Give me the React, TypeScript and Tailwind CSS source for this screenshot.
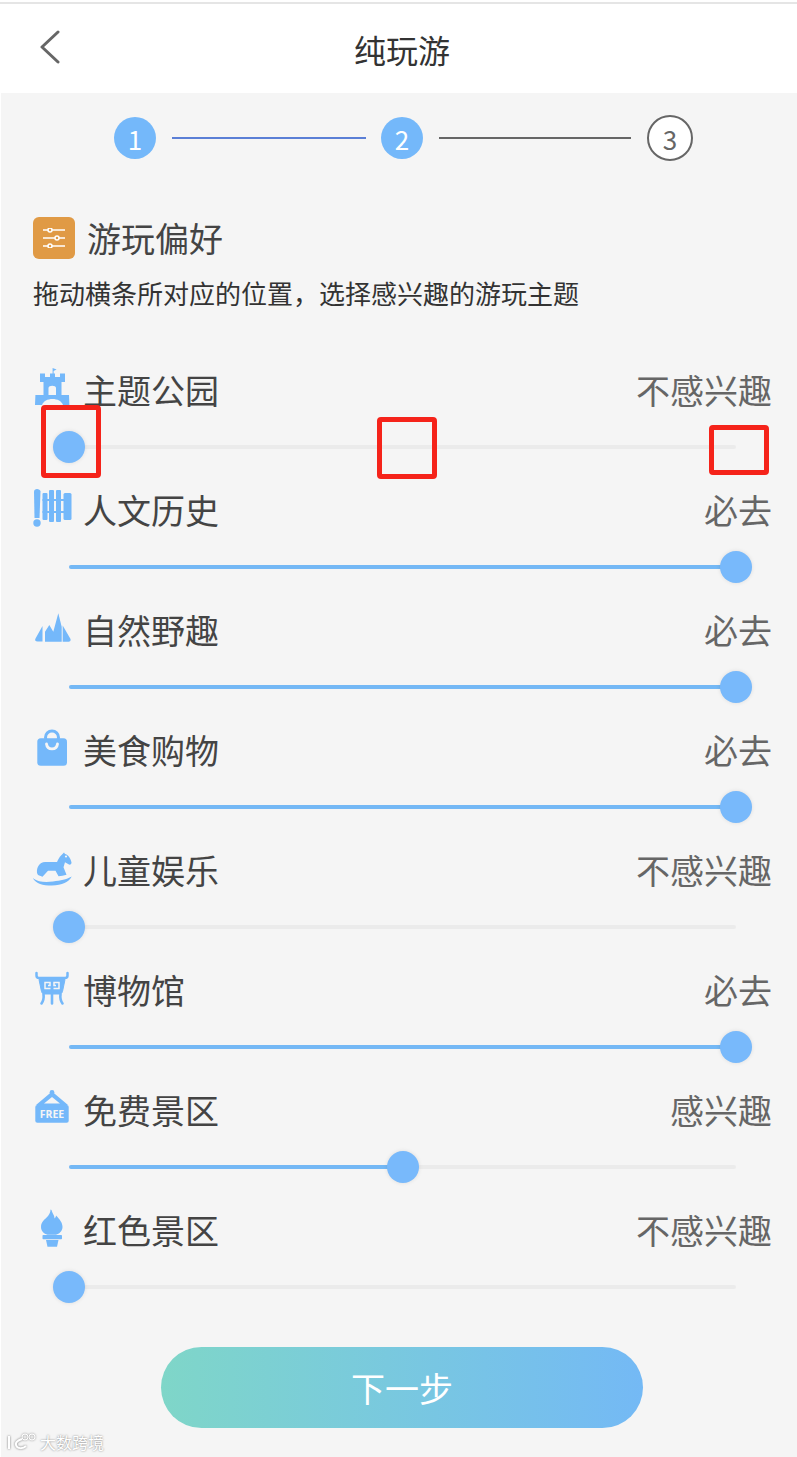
import React from 'react';

const FONT = "font-['Noto_Sans_CJK_SC','Microsoft_YaHei',sans-serif]";
const BLUE = '#74b8fa';

const Castle = () => (
  <svg width="40" height="40" viewBox="0 0 40 40" className="overflow-visible" fill={BLUE}>
    <path d="M7 4.5h5V8h5V4.5h2.6V-1l4 1.6-3 1.3v2.6H22V8h5V4.5h5V13h-3.5v13H36l.4 10H30c-1.5-4-5.5-6-10.500-6S10.500 32 9 36H2l.4-10h8.100V13H7z" />
    <path d="M15.500 26v-7c0-3 7.500-3 7.500 0v7z" fill="#f5f5f5" />
  </svg>
);

const Scroll = () => (
  <svg width="40" height="40" viewBox="0 0 40 40" fill={BLUE}>
    <path d="M1 2.500C1 1 2.500 0 4 0s3.500 1 3.500 2.500L6.500 29h-5z" />
    <circle cx="4" cy="34" r="3.700" />
    <rect x="9.500" y="4" width="5" height="27" rx="1" />
    <rect x="16" y="1" width="5" height="32" rx="1" />
    <rect x="23" y="1" width="5" height="32" rx="1" />
    <rect x="30.500" y="4" width="8" height="27" rx="1.500" />
    <rect x="9.500" y="10" width="22" height="2" />
    <rect x="9.500" y="22" width="22" height="2" />
  </svg>
);

const Mountain = () => (
  <svg width="40" height="40" viewBox="0 0 40 40" fill={BLUE}>
    <path d="M2.500 29.500 9.500 17v15.500H4.500c-2 0-3-1.300-2-3z" />
    <path d="M12 32.700V22.700L16.300 16l4 6.700L25.300 4.300l3.400 13.400v15z" />
    <path d="M29.700 16.500 37.500 30c.6 1.500-.5 2.700-2 2.700h-5.800z" />
  </svg>
);

const Bag = () => (
  <svg width="40" height="40" viewBox="0 0 40 40">
    <circle cx="19" cy="8.500" r="6.500" fill="none" stroke={BLUE} strokeWidth="3" />
    <rect x="4.300" y="9.300" width="29.700" height="27.400" rx="3.500" fill={BLUE} />
    <path d="M13.500 15c.8 6.500 10.200 6.500 11 0" fill="none" stroke="#f5f5f5" strokeWidth="2.800" strokeLinecap="round" />
  </svg>
);

const Horse = () => (
  <svg width="40" height="40" viewBox="0 0 40 40" fill={BLUE}>
    <path d="M4 24c-.5-6 2.500-10.500 8-11h12c1-2.500 2.500-5 4-6.500L31 3.500l1 1.500c3 .5 5.500 4 6.500 8.500.2 1.500-1.500 2.800-3 1.800l-3.500-2-1.500 5 3 7.500c-2.500.5-5.500 1.500-8 1.500l-3-5.500H15l-5.500 6L5 26z" />
    <path d="M-.3 29C5 33 12 33.500 20 32.500S33 30.500 38.700 27.500C36 33 29 36.500 19 36.500S3 34.500-.3 29z" />
    <circle cx="33" cy="7.500" r="1.100" fill="#f5f5f5" />
  </svg>
);

const Ding = () => (
  <svg width="40" height="40" viewBox="0 0 40 40" fill="none" stroke={BLUE}>
    <path d="M3.500 4v2.500c0 1.500 1 2.500 2.500 2.500h26c1.500 0 2.500-1 2.500-2.500V4" strokeWidth="2.500" strokeLinecap="round" />
    <path d="M6 10.500h26l-2.500 12c-.4 1.500-1.500 2.500-3 2.500h-15c-1.500 0-2.600-1-3-2.500z" fill={BLUE} strokeWidth="1" />
    <path d="M17.500 19.500h-5.500v-6h5v3h-2M20.500 19.500h5.500v-6h-5v3h2" stroke="#f5f5f5" strokeWidth="1.500" />
    <path d="M10.500 25c.5 4-.5 7.500-2 9.500M19 25v9.500M27.500 25c-.5 4 .5 7.500 2 9.500" strokeWidth="2.600" strokeLinecap="round" />
  </svg>
);

const FreeSign = () => (
  <svg width="40" height="40" viewBox="0 0 40 40" fill={BLUE}>
    <path d="M19 2.500 3 16h32zM19 8 11 14.500h16z" fillRule="evenodd" />
    <circle cx="19" cy="3.500" r="2.400" />
    <rect x="2.300" y="16" width="33.400" height="17.700" rx="2" />
    <text x="19" y="28.800" textAnchor="middle" fontSize="10.500" fontWeight="700" fill="#f5f5f5" fontFamily="'Open Sans',sans-serif">FREE</text>
  </svg>
);

const Torch = () => (
  <svg width="40" height="40" viewBox="0 0 40 40" fill={BLUE}>
    <path d="M18.500 1c1 4 3 5 3 8.500 1-.8 1.500-2 1.500-3 3.500 3.500 6.500 7 6.500 11.500 0 4-3.200 6.700-6.500 7.700h-8.500c-3.500-1-6.500-3.700-6.500-7.700 0-5.500 4-7.500 7-11 1.500-1.800 2.500-3.800 2.500-6.500z" />
    <rect x="9.500" y="26" width="19.500" height="4.300" rx=".8" />
    <path d="M13 31h12.500l-1.500 6.700h-9.500z" />
  </svg>
);

const ROWS = [
  { name: '主题公园', level: '不感兴趣', value: 0, icon: <Castle /> },
  { name: '人文历史', level: '必去', value: 100, icon: <Scroll /> },
  { name: '自然野趣', level: '必去', value: 100, icon: <Mountain /> },
  { name: '美食购物', level: '必去', value: 100, icon: <Bag /> },
  { name: '儿童娱乐', level: '不感兴趣', value: 0, icon: <Horse /> },
  { name: '博物馆', level: '必去', value: 100, icon: <Ding /> },
  { name: '免费景区', level: '感兴趣', value: 50, icon: <FreeSign /> },
  { name: '红色景区', level: '不感兴趣', value: 0, icon: <Torch /> },
];

const Slider = ({ value }: { value: number }) => (
  <div className="mt-[17px] mb-[21px] ml-[36px] mr-[36px] h-[32px] flex items-center">
    <div className="relative w-full h-[4px] rounded-full bg-[#ebebeb]">
      <div className="h-full rounded-full bg-[#74b8f5]" style={{ width: `${value}%` }} />
      <div
        className="absolute top-1/2 w-[32px] h-[32px] -mt-[16px] -ml-[16px] rounded-full bg-[#78b9fb] shadow-[0_0_4px_rgba(0,0,0,0.1)]"
        style={{ left: `${value}%` }}
      />
    </div>
  </div>
);

const App: React.FC = () => {
  return (
    <div className={`relative w-[797px] h-[1457px] overflow-hidden bg-white ${FONT}`}>
      {/* Header */}
      <div className="pt-[2px] h-[93px] bg-white">
        <div className="h-[2px] bg-[#e5e5e5]" />
        <div className="h-[89px] flex items-center pl-[40px] pr-[53px]">
          <svg width="20" height="34" viewBox="0 0 20 34" fill="none" className="mt-[-3px]">
            <path d="M18 2 2 17l16 15" stroke="#666" strokeWidth="3" strokeLinecap="round" strokeLinejoin="round" />
          </svg>
          <div className="flex-1 text-center text-[32px] leading-[44px] text-[#333]">纯玩游</div>
        </div>
      </div>

      <div className="ml-px h-[1364px] bg-[#f5f5f5] pl-[32px] pr-[25px]">
        {/* Steps */}
        <div className="pt-[22px] pl-[81px] flex items-center h-[68px]">
          <div className="w-[42px] h-[42px] rounded-full bg-[#74b8fa] text-white text-[26px] flex items-center justify-center">1</div>
          <div className="ml-[16px] w-[194px] h-[2px] bg-[#5b7fd6]" />
          <div className="ml-[15px] w-[42px] h-[42px] rounded-full bg-[#74b8fa] text-white text-[26px] flex items-center justify-center">2</div>
          <div className="ml-[16px] w-[192px] h-[2px] bg-[#666]" />
          <div className="ml-[16px] w-[46px] h-[46px] rounded-full border-2 border-[#666] bg-white text-[#666] text-[26px] flex items-center justify-center">3</div>
        </div>

        {/* Section title */}
        <div className="mt-[56px] flex items-center h-[42px]">
          <div className="w-[42px] h-[42px] rounded-[6px] bg-[#e09a45] flex items-center justify-center">
            <svg width="24" height="20" viewBox="0 0 24 20" fill="none" stroke="#fff" strokeWidth="1.500">
              <path d="M1 2h22M1 10h22M1 18h22" />
              <circle cx="8" cy="2" r="2" fill="#e09a45" />
              <circle cx="15" cy="10" r="2" fill="#e09a45" />
              <circle cx="8" cy="18" r="2" fill="#e09a45" />
            </svg>
          </div>
          <div className="ml-[12px] text-[34px] leading-[42px] text-[#444]">游玩偏好</div>
        </div>
        <div className="mt-[14px] text-[26px] leading-[40px] text-[#333]">拖动横条所对应的位置，选择感兴趣的游玩主题</div>

        {/* Preference sliders */}
        <div className="mt-[51px]">
          {ROWS.map((row) => (
            <div key={row.name} className="h-[120px]">
              <div className="h-[50px] flex items-center justify-between text-[34px]">
                <div className="flex items-center">
                  <div className="w-[40px] h-[40px] shrink-0">{row.icon}</div>
                  <span className="ml-[10px] text-[#444]">{row.name}</span>
                </div>
                <span className="text-[#666]">{row.level}</span>
              </div>
              <Slider value={row.value} />
            </div>
          ))}
        </div>

        <button className="mt-[23px] ml-[128px] block w-[482px] h-[81px] rounded-full bg-gradient-to-r from-[#7fd6c8] to-[#74b9f5] text-white text-[34px]">
          下一步
        </button>
      </div>

      {/* Annotation boxes */}
      <div className="absolute left-[41px] top-[405px] w-[60px] h-[73px] border-[5px] border-[#f5231a] rounded-[4px]" />
      <div className="absolute left-[377px] top-[417px] w-[60px] h-[62px] border-[5px] border-[#f5231a] rounded-[4px]" />
      <div className="absolute left-[709px] top-[425px] w-[60px] h-[50px] border-[5px] border-[#f5231a] rounded-[4px]" />

      {/* Watermark */}
      <div className="absolute left-[7px] top-[1432px] flex items-center text-[16px] leading-[20px] text-white [text-shadow:0_0_2px_#777]">
        <svg width="30" height="18" viewBox="0 0 30 18" fill="none" stroke="#fff" strokeWidth="2" className="drop-shadow-[0_0_1px_#777]">
          <path d="M2 3v13M15 6c-3 1-7 3-6 6 1 4 7 4 10 1" />
          <circle cx="18" cy="4" r="3" strokeWidth="1" />
          <circle cx="25" cy="4" r="3" strokeWidth="1" />
        </svg>
        <span className="ml-[3px]">大数跨境</span>
      </div>
    </div>
  );
};

export default App;
